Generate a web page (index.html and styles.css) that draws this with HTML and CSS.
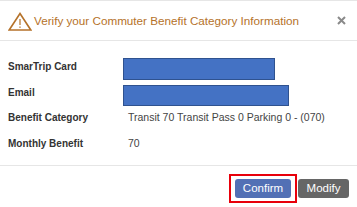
FILE: index.html
```html
<!DOCTYPE html>
<html lang="en">
<head>
    <meta charset="UTF-8">
    <meta name="viewport" content="width=device-width, initial-scale=1.0">
    <title>Verify Commuter Benefit</title>
    <link rel="stylesheet" href="styles.css">
</head>
<body>

    <div class="modal">
        <!-- Header -->
        <div class="modal-header">
            <svg class="warn-icon" width="24" height="19" viewBox="0 0 24 19">
                <polygon points="12,1.5 22.8,18 1.2,18" fill="none" stroke="#b5722a" stroke-width="1.6" stroke-linejoin="miter"/>
                <rect x="11.4" y="7" width="1.2" height="6" fill="#b5722a"/>
                <rect x="11.4" y="14.5" width="1.2" height="1.4" fill="#b5722a"/>
            </svg>
            <h4 class="modal-title">Verify your Commuter Benefit Category Information</h4>
            <svg class="close" width="9" height="9" viewBox="0 0 9 9">
                <path d="M1 1 L8 8 M8 1 L1 8" stroke="#8a8a8a" stroke-width="2"/>
            </svg>
        </div>

        <!-- Body -->
        <div class="modal-body">
            <div class="info-row">
                <span class="label">SmarTrip Card</span>
                <span class="redact redact-card"></span>
            </div>
            <div class="info-row">
                <span class="label">Email</span>
                <span class="redact redact-email"></span>
            </div>
            <div class="info-row">
                <span class="label">Benefit Category</span>
                <span class="value">Transit 70 Transit Pass 0 Parking 0 - (070)</span>
            </div>
            <div class="info-row">
                <span class="label">Monthly Benefit</span>
                <span class="value">70</span>
            </div>
        </div>

        <!-- Footer -->
        <div class="modal-footer">
            <div class="highlight">
                <button class="btn btn-primary">Confirm</button>
            </div>
            <button class="btn btn-dark">Modify</button>
        </div>
    </div>

</body>
</html>
```

FILE: styles.css
```css
* {
    margin: 0;
    padding: 0;
    box-sizing: border-box;
}

body {
    width: 357px;
    height: 207px;
    background: #ffffff;
    font-family: 'Liberation Sans', Arial, sans-serif;
    color: #333;
    overflow: hidden;
}

/* Header */
.modal-header {
    height: 41px;
    border-top: 1px solid #e6e6e6;
    border-bottom: 1px solid #e6e6e6;
    display: flex;
    align-items: center;
    padding: 0 10px 0 8px;
}

.warn-icon {
    margin-top: 2px;
    margin-right: 2px;
    flex-shrink: 0;
}

.modal-title {
    font-size: 11.7px;
    font-weight: normal;
    color: #b5722a;
    flex: 1;
    white-space: nowrap;
    margin-bottom: 1px;
}

.close {
    flex-shrink: 0;
    margin-right: 1px;
}

/* Body */
.modal-body {
    height: 124px;
    padding: 19px 8px 0 8px;
    display: grid;
    grid-template-rows: 26px 25px 26px auto;
}

.info-row {
    display: flex;
    align-items: flex-start;
}

.label {
    width: 121px;
    flex-shrink: 0;
    font-size: 10px;
    line-height: 13px;
    font-weight: bold;
    color: #333;
}

.value {
    font-size: 10.5px;
    line-height: 13px;
    color: #444;
    margin-left: -1px;
}

.redact {
    display: block;
    background: #4472c4;
    border: 1px solid #2f528f;
    margin-left: -6px;
}

.redact-card {
    width: 152px;
    height: 22px;
    margin-top: -2px;
}

.redact-email {
    width: 166px;
    height: 21px;
    margin-top: -1px;
}

/* Footer */
.modal-footer {
    border-top: 1px solid #e6e6e6;
    display: flex;
    justify-content: flex-end;
    align-items: center;
    gap: 1px;
    padding: 8px 8px 0 0;
}

.highlight {
    border: 2px solid #e8000b;
    padding: 3px 4px 3px 4px;
}

.btn {
    height: 19px;
    border: none;
    border-radius: 3px;
    color: #fff;
    font-family: 'Liberation Sans', Arial, sans-serif;
    font-size: 11.5px;
    line-height: 19px;
    display: block;
}

.btn-primary {
    width: 56px;
    background: #5270b5;
}

.btn-dark {
    width: 51px;
    background: #666666;
}
```
